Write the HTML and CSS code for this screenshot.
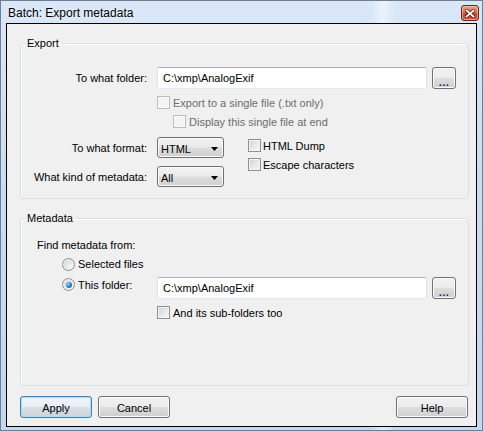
FILE: index.html
```html
<!DOCTYPE html>
<html>
<head>
<meta charset="utf-8">
<title>Batch: Export metadata</title>
<link rel="stylesheet" href="styles.css">
</head>
<body>
<div class="window">
  <div class="titlebar">
    <span class="title">Batch: Export metadata</span>
    <span class="close-btn">
      <svg width="10" height="9" viewBox="0 0 10 9"><path d="M1.5 1.5L8.5 7.5M8.5 1.5L1.5 7.5" stroke="#4a1a12" stroke-width="3.4" stroke-linecap="square"/><path d="M1.5 1.5L8.5 7.5M8.5 1.5L1.5 7.5" stroke="#ffffff" stroke-width="1.8" stroke-linecap="square"/></svg>
    </span>
  </div>
  <div class="client">
    <fieldset class="group export">
      <legend>Export</legend>
      <div class="row folder-row">
        <span class="lbl">To what folder:</span>
        <div class="textbox">C:\xmp\AnalogExif</div>
        <button class="btn browse">...</button>
      </div>
      <div class="row check-row disabled first-check">
        <span class="cb"></span><span class="ctext">Export to a single file (.txt only)</span>
      </div>
      <div class="row check-row disabled sub-check">
        <span class="cb"></span><span class="ctext">Display this single file at end</span>
      </div>
      <div class="format-block">
        <div class="combos">
          <div class="row combo-row">
            <span class="lbl">To what format:</span>
            <div class="combo"><span class="combo-text">HTML</span><svg class="arrow" width="7" height="4" viewBox="0 0 7 4"><path d="M0 0H7L3.5 4Z" fill="#000"/></svg></div>
          </div>
          <div class="row combo-row second">
            <span class="lbl">What kind of metadata:</span>
            <div class="combo"><span class="combo-text">All</span><svg class="arrow" width="7" height="4" viewBox="0 0 7 4"><path d="M0 0H7L3.5 4Z" fill="#000"/></svg></div>
          </div>
        </div>
        <div class="checks">
          <div class="row check-row"><span class="cb"></span><span class="ctext">HTML Dump</span></div>
          <div class="row check-row"><span class="cb"></span><span class="ctext">Escape characters</span></div>
        </div>
      </div>
    </fieldset>

    <fieldset class="group metadata">
      <legend>Metadata</legend>
      <div class="find-label">Find metadata from:</div>
      <div class="row radio-row">
        <span class="radio"></span><span class="ctext">Selected files</span>
      </div>
      <div class="row this-folder-row">
        <div class="radio-label"><span class="radio checked"></span><span class="ctext">This folder:</span></div>
        <div class="textbox">C:\xmp\AnalogExif</div>
        <button class="btn browse">...</button>
      </div>
      <div class="row check-row subfolders">
        <span class="cb"></span><span class="ctext">And its sub-folders too</span>
      </div>
    </fieldset>

    <div class="buttons">
      <button class="btn action default">Apply</button>
      <button class="btn action">Cancel</button>
      <span class="spacer"></span>
      <button class="btn action help">Help</button>
    </div>
  </div>
</div>
</body>
</html>
```

FILE: styles.css
```css
html, body {
  margin: 0;
  padding: 0;
  background: #ffffff;
}

body {
  font-family: "Liberation Sans", Arial, sans-serif;
  font-size: 11px;
  color: #000;
}

.window {
  box-sizing: border-box;
  width: 483px;
  height: 431px;
  border: 1px solid #6f7f92;
  padding: 0 5px 3px 5px;
  display: flex;
  flex-direction: column;
  background:
    linear-gradient(90deg, rgba(255,255,255,0) 77%, rgba(255,255,255,0.45) 79%, rgba(255,255,255,0.45) 80%, rgba(255,255,255,0) 82%),
    linear-gradient(180deg, #d9e7f7 0%, #cbddf2 40%, #c3d7ef 100%);
}

.titlebar {
  height: 22px;
  display: flex;
  align-items: flex-start;
  margin: 0 -2px 0 -5px;
  padding-left: 7px;
}

.title {
  flex: 1;
  font-family: "Liberation Sans", Arial, sans-serif;
  font-size: 12px;
  line-height: 14px;
  margin-top: 5px;
  color: #000;
  text-shadow: 0 0 6px rgba(255,255,255,0.9);
}

.close-btn {
  box-sizing: border-box;
  width: 18px;
  height: 16px;
  margin-top: 4px;
  border: 1px solid #6b2418;
  border-radius: 3px;
  background: linear-gradient(180deg, #e9a894 0%, #d8694f 48%, #c7442a 52%, #d0593c 100%);
  box-shadow: inset 0 0 0 1px rgba(255,210,190,0.55);
  display: flex;
  align-items: center;
  justify-content: center;
}

.client {
  flex: 1;
  box-sizing: border-box;
  border: 1px solid #000;
  background: #f0f0f0;
  padding: 13px 7px 8px 13px;
  display: flex;
  flex-direction: column;
}

.group {
  margin: 0;
  padding: 0;
  border: 1px solid #d5dfe5;
  border-radius: 3px;
  box-shadow: inset 1px 1px 0 #ffffff;
  min-width: 0;
}

.group legend {
  margin-left: 4px;
  padding: 0 3px 0 2px;
  line-height: 13px;
  font-size: 11px;
}

.export {
  padding-top: 17px;
  padding-bottom: 11px;
}

.metadata {
  margin-top: 13px;
  flex: 1;
  padding-top: 10px;
}

.row {
  display: flex;
  align-items: center;
}

.lbl {
  box-sizing: border-box;
  width: 136px;
  padding-right: 10px;
  text-align: right;
  white-space: nowrap;
}

.folder-row {
  height: 22px;
}

.textbox {
  box-sizing: border-box;
  width: 270px;
  height: 22px;
  padding-left: 5px;
  line-height: 20px;
  background: #fff;
  border: 1px solid;
  border-color: #abadb3 #dbdfe6 #e3e9ef #e2e3ea;
  border-radius: 2px;
}

.btn {
  box-sizing: border-box;
  margin: 0;
  padding: 0;
  font-family: "Liberation Sans", Arial, sans-serif;
  font-size: 11px;
  color: #000;
  border: 1px solid #707070;
  border-radius: 3px;
  background: linear-gradient(180deg, #f2f2f2 0%, #ebebeb 49%, #dddddd 51%, #cfcfcf 100%);
  box-shadow: inset 0 0 0 1px #fbfbfb;
}

.browse {
  width: 24px;
  height: 22px;
  margin-left: 5px;
  color: #1e1e7a;
  font-weight: bold;
  letter-spacing: 0.5px;
  line-height: 22px;
  padding-top: 3px;
}

.check-row {
  height: 19px;
}

.first-check {
  margin-top: 4px;
  padding-left: 136px;
}

.sub-check {
  padding-left: 152px;
}

.cb {
  box-sizing: border-box;
  width: 13px;
  height: 13px;
  flex: none;
  border: 1px solid #8e8f8f;
  background: linear-gradient(135deg, #cdd1d7 0%, #e6e7e9 50%, #f8f8f8 100%);
  box-shadow: inset 0 0 0 1px #f4f4f4;
}

.ctext {
  margin-left: 3px;
  white-space: nowrap;
}

.disabled {
  color: #6d6d6d;
}

.disabled .cb {
  border-color: #bcbcbc;
  background: #f4f4f4;
  box-shadow: inset 0 0 0 1px #f9f9f9;
}

.format-block {
  display: flex;
  margin-top: 6px;
}

.combo-row {
  height: 21px;
}

.combo-row.second {
  margin-top: 8px;
}

.combo {
  box-sizing: border-box;
  width: 67px;
  height: 21px;
  border: 1px solid #707070;
  border-radius: 3px;
  background: linear-gradient(180deg, #f2f2f2 0%, #ebebeb 49%, #dddddd 51%, #cfcfcf 100%);
  box-shadow: inset 0 0 0 1px #fbfbfb;
  display: flex;
  align-items: center;
  padding: 2px 5px 0 3px;
}

.combo-text {
  flex: 1;
}

.arrow {
  margin-top: 1px;
}

.checks {
  margin-left: 24px;
  margin-top: -1px;
}

.checks .ctext {
  margin-left: 2px;
}

.find-label {
  padding-left: 16px;
  height: 19px;
  line-height: 20px;
}

.radio-row {
  height: 20px;
  padding-left: 41px;
}

.radio {
  box-sizing: border-box;
  width: 13px;
  height: 13px;
  flex: none;
  border-radius: 50%;
  border: 1px solid #8e8f8f;
  background: radial-gradient(circle at 65% 65%, #f8f8f8 0%, #dcdde0 60%, #c9ccd2 100%);
  box-shadow: inset 0 0 0 1px #f4f4f4;
  display: flex;
  align-items: center;
  justify-content: center;
}

.radio.checked::after {
  content: "";
  width: 6px;
  height: 6px;
  border-radius: 50%;
  background: radial-gradient(circle at 35% 35%, #9ee0ff 0%, #2b8ad3 45%, #0d4f8c 100%);
}

.this-folder-row {
  align-items: flex-start;
  margin-top: 3px;
  padding-left: 41px;
}

.radio-label {
  width: 95px;
  height: 15px;
  display: flex;
  align-items: center;
}

.radio-row .ctext,
.radio-label .ctext {
  margin-left: 3px;
}

.subfolders {
  margin-top: 4px;
  padding-left: 136px;
}

.buttons {
  display: flex;
  margin-top: 10px;
  height: 22px;
}

.action {
  width: 72px;
  height: 22px;
  padding-top: 2px;
}

.action + .action {
  margin-left: 6px;
}

.spacer {
  flex: 1;
}

.help {
  margin-right: 1px;
}

.default {
  border-color: #3c7fb1;
  box-shadow: inset 0 0 0 1px #a7e2f8;
  background: linear-gradient(180deg, #f0f4f7 0%, #e8eef2 49%, #d9e0e5 51%, #ccd4da 100%);
}
```
